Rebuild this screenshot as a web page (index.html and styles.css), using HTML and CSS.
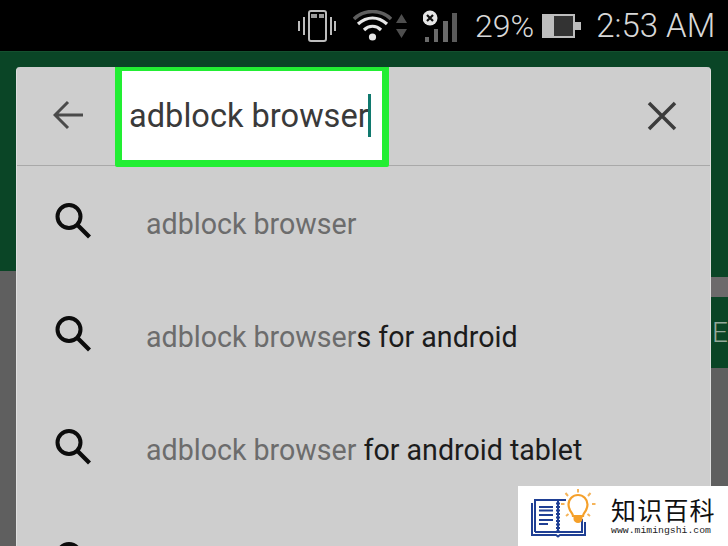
FILE: index.html
```html
<!DOCTYPE html>
<html lang="en">
<head>
    <meta charset="UTF-8">
    <title>Search</title>
    <link rel="stylesheet" href="styles.css">
</head>
<body>
    <div class="screen">
        <div class="status-bar">
            <svg class="icon-vibrate" width="38" height="32" viewBox="0 0 38 32">
                <rect x="11" y="1" width="17" height="30" rx="2" fill="none" stroke="#bdbdbd" stroke-width="2"/>
                <rect x="13" y="4" width="6" height="4" fill="#9a9a9a"/>
                <rect x="21" y="4" width="5" height="4" fill="#9a9a9a"/>
                <path d="M1 11v10M6 7v18M33 7v18M37 11v10" stroke="#bdbdbd" stroke-width="2" fill="none"/>
            </svg>
            <svg class="icon-wifi" width="39" height="32" viewBox="0 0 39 32">
                <path d="M1 9C11 -1 28 -1 38 9" stroke="#5e5e5e" stroke-width="3.5" fill="none"/>
                <path d="M5 14C14 6 25 6 34 14M11 20C16 15 23 15 28 20" stroke="#e6e6e6" stroke-width="3.2" fill="none"/>
                <circle cx="19.500" cy="27" r="3.600" fill="#e6e6e6"/>
            </svg>
            <svg class="icon-arrows" width="11" height="24" viewBox="0 0 11 24">
                <path d="M5.500 0L11 9H0zM0 15h11L5.500 24z" fill="#4e4e4e"/>
            </svg>
            <svg class="icon-signal" width="35" height="32" viewBox="0 0 35 32">
                <rect x="2" y="27" width="4" height="5" fill="#6a6a6a"/>
                <rect x="11" y="19" width="4" height="13" fill="#6a6a6a"/>
                <rect x="20" y="11" width="5" height="21" fill="#6a6a6a"/>
                <rect x="29" y="3" width="5" height="29" fill="#5a5a5a"/>
                <circle cx="7" cy="8" r="7.500" fill="#e6e6e6"/>
                <path d="M4 5l6 6M10 5l-6 6" stroke="#111" stroke-width="2.200"/>
            </svg>
            <span class="battery-text">29%</span>
            <svg class="icon-battery" width="39" height="24" viewBox="0 0 39 24">
                <rect x="0" y="0" width="33" height="24" fill="#bdbdbd"/>
                <rect x="12" y="2" width="19" height="20" fill="#333"/>
                <rect x="33" y="8" width="6" height="8" fill="#bdbdbd"/>
            </svg>
            <span class="clock">2:53 AM</span>
        </div>

        <div class="app-bar"></div>
        <div class="lower">
            <div class="tab-edge"></div>
            <div class="tab-strip"></div>
            <div class="tab-label">E</div>
        </div>

        <div class="search-card">
            <div class="search-head">
                <svg class="back" width="30" height="30" viewBox="0 0 30 30">
                    <path d="M30 15H3M15 2L2 15l13 13" fill="none" stroke="#4a4a4a" stroke-width="3"/>
                </svg>
                <div class="search-box">
                    <span class="query">adblock browser</span><span class="caret"></span>
                </div>
                <svg class="clear" width="30" height="30" viewBox="0 0 30 30">
                    <path d="M2 2l26 26M28 2L2 28" fill="none" stroke="#3c3c3c" stroke-width="3.500"/>
                </svg>
            </div>

            <div class="row">
                <svg class="search-icon" width="36" height="36" viewBox="0 0 36 36">
                    <circle cx="14" cy="13.500" r="11.500" fill="none" stroke="#0c0c0c" stroke-width="4"/>
                    <path d="M22.500 22l12 12" stroke="#0c0c0c" stroke-width="4.200"/>
                </svg>
                <span class="suggestion"><span class="typed">adblock browser</span></span>
            </div>
            <div class="row">
                <svg class="search-icon" width="36" height="36" viewBox="0 0 36 36">
                    <circle cx="14" cy="13.500" r="11.500" fill="none" stroke="#0c0c0c" stroke-width="4"/>
                    <path d="M22.500 22l12 12" stroke="#0c0c0c" stroke-width="4.200"/>
                </svg>
                <span class="suggestion"><span class="typed">adblock browser</span>s for android</span>
            </div>
            <div class="row">
                <svg class="search-icon" width="36" height="36" viewBox="0 0 36 36">
                    <circle cx="14" cy="13.500" r="11.500" fill="none" stroke="#0c0c0c" stroke-width="4"/>
                    <path d="M22.500 22l12 12" stroke="#0c0c0c" stroke-width="4.200"/>
                </svg>
                <span class="suggestion"><span class="typed">adblock browser</span> for android tablet</span>
            </div>
            <div class="row">
                <svg class="search-icon" width="36" height="36" viewBox="0 0 36 36">
                    <circle cx="14" cy="13.500" r="11.500" fill="none" stroke="#0c0c0c" stroke-width="4"/>
                    <path d="M22.500 22l12 12" stroke="#0c0c0c" stroke-width="4.200"/>
                </svg>
            </div>
        </div>

        <div class="watermark">
            <svg class="logo" width="72" height="50" viewBox="0 0 72 50">
                <!-- livro -->
                <path d="M2 14v32h24l2 1.500 2-1.500h25V33" fill="none" stroke="#1f3f94" stroke-width="2"/>
                <path d="M5 43V11h23v32H5M28 43h24V30M28 11h8" fill="none" stroke="#1f3f94" stroke-width="2"/>
                <path d="M9 18h14M9 21.500h14M9 26h14M9 31h14M9 35h9" stroke="#1f3f94" stroke-width="2.200"/>
                <path d="M28 10v34" stroke="#1f3f94" stroke-width="4" stroke-dasharray="2 1.500"/>
                <!-- lampada -->
                <path d="M43 27c0-3-4.500-5-4.500-11.500a9.500 9.500 0 0 1 19 0C57.500 22 53 24 53 27z" fill="#fff" stroke="#f5a02a" stroke-width="2.200"/>
                <path d="M43.500 28h9v2a4.500 4 0 0 1-9 0z" fill="#f5a02a"/>
                <path d="M48 0v3.500M35.500 4l2.500 3M60.500 4L58 7M31 15h3.500M62 15h3.500M36 27l2.500-2M60 27l-2.500-2" stroke="#f5b45a" stroke-width="2"/>
            </svg>
            <div class="brand">
                <div class="brand-name">知识百科</div>
                <div class="brand-url">www.mimingshi.com</div>
            </div>
        </div>
    </div>
</body>
</html>
```
FILE: styles.css
```css
body {
    margin: 0;
    background-color: #000;
    font-family: Roboto, "Noto Sans", sans-serif;
}

.screen {
    position: relative;
    display: flex;
    flex-direction: column;
    width: 728px;
    height: 546px;
    overflow: hidden;
}

.status-bar {
    display: flex;
    align-items: center;
    flex: 0 0 51px;
    padding: 0 0 0 298px;
    box-sizing: border-box;
    background-color: #000;
    color: #d8d8d8;
}

.icon-wifi { margin-left: 17px; }
.icon-arrows { margin-left: 4px; }
.icon-signal { margin-left: 16px; }
.icon-battery { margin-left: 8px; }

.battery-text, .clock {
    font-weight: 300;
    white-space: nowrap;
}

.battery-text {
    margin-left: 17px;
    font-size: 32px;
}

.clock {
    margin-left: 15px;
    font-size: 33px;
}

.app-bar {
    flex: 0 0 220px;
    background-color: #0a4526;
    border-top: 1px solid #14502f;
    box-sizing: border-box;
}

.lower {
    display: flex;
    flex-direction: column;
    flex: 1;
    align-items: flex-end;
    background-color: #5f5f5f;
}

.tab-edge {
    width: 17px;
    height: 6px;
    background-color: #0a4526;
}

.tab-strip {
    width: 17px;
    height: 20px;
    background-color: #6c6a6b;
}

.tab-label {
    width: 17px;
    height: 71px;
    padding-left: 1px;
    box-sizing: border-box;
    overflow: hidden;
    background-color: #0a4526;
    color: #93a89b;
    font-size: 28px;
    font-weight: 300;
    line-height: 71px;
}

/* card de busca por cima da tela */
.search-card {
    position: absolute;
    top: 67px;
    left: 16px;
    width: 695px;
    height: 479px;
    overflow: hidden;
    background-color: #cecece;
    border-left: 1px solid #dedede;
    border-right: 1px solid #dedede;
    border-radius: 4px 4px 0 0;
    box-sizing: border-box;
}

.search-head {
    display: flex;
    align-items: center;
    height: 99px;
    padding: 0 33px 0 36px;
    box-sizing: border-box;
    border-bottom: 1px solid #a9a9a9;
}

.back {
    margin-top: -3px;
}

.search-box {
    display: flex;
    align-items: center;
    position: relative;
    z-index: 1;
    width: 274px;
    height: 103px;
    margin: -3px 0 -2px 32px;
    padding-left: 7px;
    box-sizing: border-box;
    background-color: #fff;
    border: 7px solid #22ee33;
    border-radius: 2px;
}

.query {
    color: #3a3a3a;
    font-size: 32.6px;
    white-space: nowrap;
}

.caret {
    flex: 0 0 3px;
    height: 43px;
    margin-left: -1px;
    background-color: #10796e;
}

.clear {
    margin-left: auto;
}

.row {
    display: flex;
    align-items: center;
    height: 113px;
    padding-left: 38px;
    color: #1c1c1c;
    font-size: 28.6px;
    white-space: nowrap;
}

.search-icon {
    flex: none;
    margin: -3px 55px 0 0;
}

.suggestion {
    margin-top: 3px;
}

.typed {
    color: #6c6c6c;
}

.watermark {
    position: absolute;
    right: 0;
    bottom: 0;
    display: flex;
    align-items: center;
    width: 210px;
    height: 60px;
    padding-left: 12px;
    box-sizing: border-box;
    background-color: #fff;
}

.logo {
    align-self: flex-start;
    margin-top: 3px;
}

.brand {
    display: flex;
    flex-direction: column;
    gap: 2px;
    margin-left: 9px;
}

.brand-name {
    color: #111;
    font-family: "Noto Sans CJK SC", sans-serif;
    font-size: 25px;
    line-height: 27px;
    letter-spacing: 1.200px;
}

.brand-url {
    color: #222;
    font-family: "Liberation Mono", monospace;
    font-size: 9.800px;
    line-height: 11px;
}
```
